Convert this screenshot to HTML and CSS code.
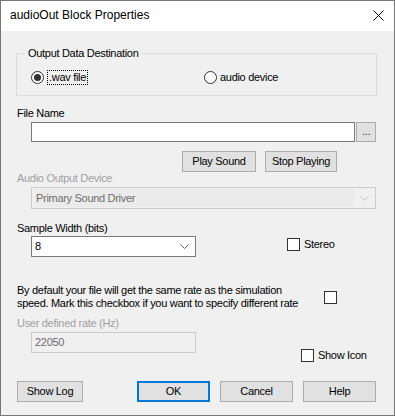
FILE: index.html
```html
<!DOCTYPE html>
<html lang="en">
<head>
  <meta charset="UTF-8">
  <title>audioOut Block Properties</title>
  <link rel="stylesheet" href="styles.css">
</head>
<body>

  <div class="window">
    <div class="titlebar">
      <span class="title">audioOut Block Properties</span>
      <svg class="close" width="11" height="11" viewBox="0 0 11 11">
        <path d="M0.5 0.5 L10.5 10.5 M10.5 0.5 L0.5 10.5" stroke="#000" stroke-width="1" fill="none"/>
      </svg>
    </div>

    <div class="client">
      <fieldset class="group">
        <legend>Output Data Destination</legend>
        <div class="radio-row">
          <label class="radio first"><span class="dot checked"></span><span class="focus">.wav file</span></label>
          <label class="radio"><span class="dot"></span><span>audio device</span></label>
        </div>
      </fieldset>

      <div class="label file-label">File Name</div>
      <div class="file-row">
        <div class="textbox file-box"></div>
        <div class="btn browse">...</div>
      </div>

      <div class="play-row">
        <div class="btn play">Play Sound</div>
        <div class="btn stop">Stop Playing</div>
      </div>

      <div class="label disabled">Audio Output Device</div>
      <div class="combo combo-off">
        <span class="combo-text">Primary Sound Driver</span>
        <svg class="chevron" width="9" height="5" viewBox="0 0 9 5">
          <path d="M0.5 0.5 L4.5 4.5 L8.5 0.5" stroke="#c8c8c8" fill="none"/>
        </svg>
      </div>

      <div class="label sample-label">Sample Width (bits)</div>
      <div class="sample-row">
        <div class="combo combo-small">
          <span class="combo-text">8</span>
          <svg class="chevron" width="9" height="5" viewBox="0 0 9 5">
            <path d="M0.5 0.5 L4.5 4.5 L8.5 0.5" stroke="#606060" fill="none"/>
          </svg>
        </div>
        <label class="check stereo"><span class="box"></span><span>Stereo</span></label>
      </div>

      <div class="rate-row">
        <p class="rate-text">By default your file will get the same rate as the simulation<br>speed. Mark this checkbox if you want to specify different rate</p>
        <span class="box rate-box"></span>
      </div>

      <div class="label disabled user-label">User defined rate (Hz)</div>
      <div class="user-row">
        <div class="textbox textbox-off">22050</div>
        <label class="check show-icon"><span class="box"></span><span>Show Icon</span></label>
      </div>

      <div class="bottom-row">
        <div class="btn log">Show Log</div>
        <div class="btn ok">OK</div>
        <div class="btn">Cancel</div>
        <div class="btn">Help</div>
      </div>
    </div>
  </div>

</body>
</html>
```

FILE: styles.css
```css
* {
  box-sizing: border-box;
}
body {
  margin: 0;
  font-family: "Liberation Sans", Arial, sans-serif;
  font-size: 11px;
  line-height: 13px;
  letter-spacing: -0.3px;
  color: #000;
  background: #f0f0f0;
}
.window {
  width: 395px;
  height: 416px;
  border: 1px solid #777;
  background: #f0f0f0;
  display: flex;
  flex-direction: column;
}
.titlebar {
  height: 30px;
  background: white;
  display: flex;
  align-items: center;
  justify-content: space-between;
  padding: 0 10px 1px 9px;
}
.title {
  font-size: 12px;
  letter-spacing: 0;
}
.close {
  display: block;
}
.client {
  flex: 1;
  padding: 0 18px 0 15px;
}

/* group box */
.group {
  margin: 16px 0 0 0;
  padding: 0 0 10px 14px;
  border: 1px solid #dcdcdc;
  width: 361px;
  min-width: 0;
}
.group legend {
  margin-left: -6px;
  padding: 0 3px;
}
.radio-row {
  display: flex;
  align-items: center;
  margin-top: 10px;
}
.radio {
  display: flex;
  align-items: center;
}
.radio.first {
  width: 173px;
}
.dot {
  width: 13px;
  height: 13px;
  border: 1px solid #333;
  border-radius: 50%;
  background: white;
  margin-right: 3px;
  position: relative;
}
.dot.checked::after {
  content: "";
  position: absolute;
  left: 2px;
  top: 2px;
  width: 7px;
  height: 7px;
  border-radius: 50%;
  background: #333;
}
.focus {
  border: 1px dotted #000;
  padding: 0 1px;
}

/* labels */
.label {
  padding-left: 1px;
}
.label.disabled {
  color: #a0a0a0;
}
.file-label {
  margin-top: 11px;
}
.sample-label {
  margin-top: 13px;
}
.user-label {
  margin-top: 7px;
}

/* text boxes and combos */
.file-row {
  display: flex;
  margin: 2px 0 0 15px;
}
.textbox {
  height: 20px;
  border: 1px solid #7a7a7a;
  background: white;
  padding: 2px 3px;
}
.file-box {
  width: 325px;
}
.textbox-off {
  width: 165px;
  height: 21px;
  border-color: #cccccc;
  background: #f0f0f0;
  color: #6d6d6d;
  padding: 3px 3px;
}
.combo {
  height: 21px;
  border: 1px solid #7a7a7a;
  background: white;
  display: flex;
  align-items: center;
  justify-content: space-between;
  padding: 0 6px 0 3px;
}
.combo-off {
  width: 345px;
  height: 22px;
  margin: 2px 0 0 15px;
  border-color: #cccccc;
  background: #f0f0f0;
  color: #6d6d6d;
}
.combo-off .combo-text {
  flex: 1;
  background: #ebebeb;
  height: 18px;
  line-height: 18px;
  margin-right: 6px;
  padding-left: 1px;
}
.combo-small {
  width: 165px;
}
.chevron {
  display: block;
}

/* buttons */
.btn {
  height: 21px;
  background: #e1e1e1;
  border: 1px solid #adadad;
  display: flex;
  align-items: center;
  justify-content: center;
  width: 73px;
}
.browse {
  width: 20px;
  height: 20px;
  margin-left: 1px;
  color: #333;
  padding-bottom: 2px;
}
.play-row {
  display: flex;
  gap: 9px;
  margin: 9px 0 0 166px;
}
.play {
  width: 74px;
}
.stop {
  width: 72px;
}

/* rows with checks */
.sample-row {
  display: flex;
  align-items: flex-start;
  margin: 1px 0 0 15px;
}
.check {
  display: flex;
  align-items: center;
}
.box {
  width: 13px;
  height: 13px;
  border: 1px solid #333;
  background: white;
  margin-right: 4px;
}
.stereo {
  margin: 2px 0 0 91px;
}
.rate-row {
  display: flex;
  align-items: center;
  margin-top: 27px;
  padding-left: 1px;
}
.rate-text {
  margin: 0;
  width: 295px;
  white-space: nowrap;
}
.rate-box {
  margin-left: 12px;
}
.user-row {
  display: flex;
  align-items: flex-start;
  margin: 2px 0 0 15px;
}
.show-icon {
  margin: 17px 0 0 105px;
}
.bottom-row {
  display: flex;
  gap: 10px;
  margin: 19px 0 0 1px;
}
.log {
  width: 66px;
  margin-right: 44px;
}
.ok {
  border: 2px solid #0078d7;
}
```
